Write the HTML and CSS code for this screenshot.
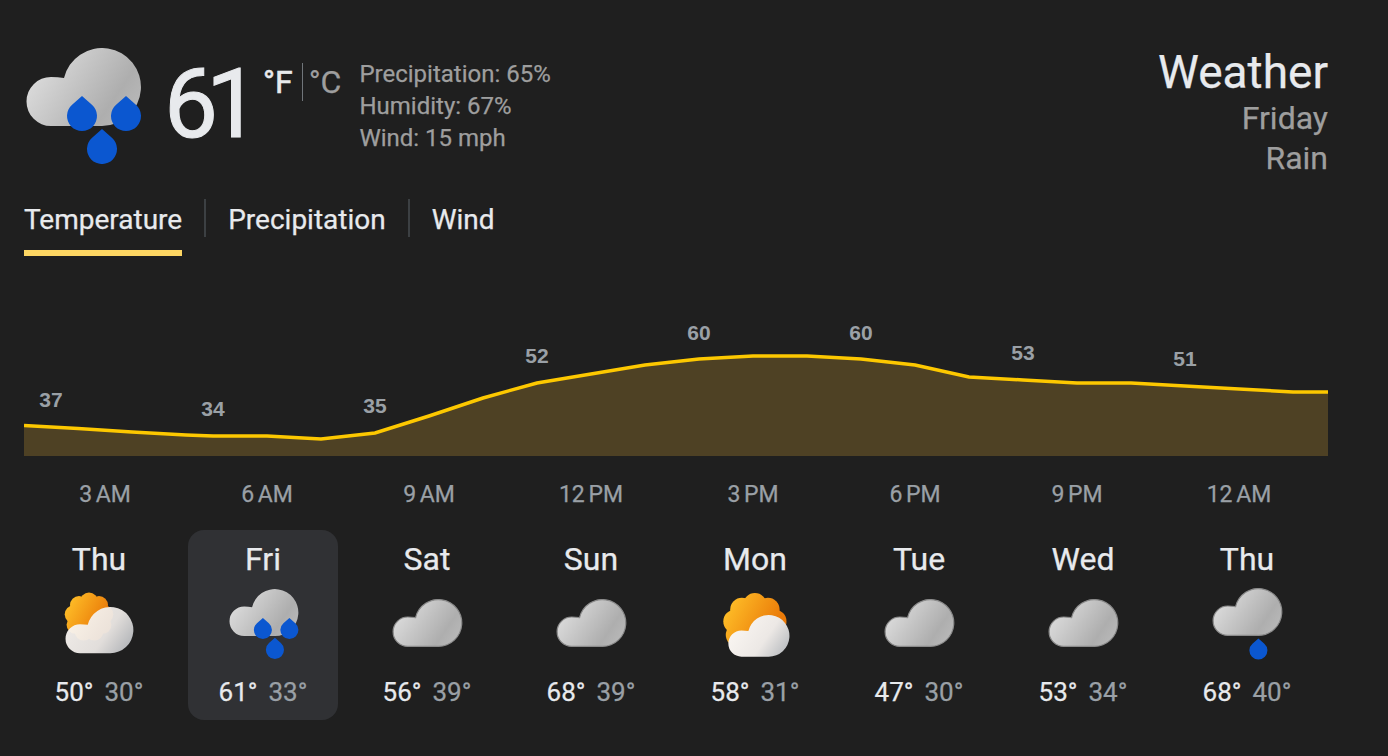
FILE: index.html
```html
<!DOCTYPE html>
<html lang="en">
<head>
<meta charset="utf-8">
<title>Weather</title>
<link rel="stylesheet" href="styles.css">
</head>
<body>
<svg class="defs" width="0" height="0" aria-hidden="true">
  <defs>
    <linearGradient id="grey" gradientUnits="userSpaceOnUse" x1="34" y1="58" x2="136" y2="128">
      <stop offset="0" stop-color="#e0e0e0"/><stop offset="0.72" stop-color="#aeaeae"/><stop offset="1" stop-color="#bcbcbc"/>
    </linearGradient>
    <linearGradient id="white" gradientUnits="userSpaceOnUse" x1="34" y1="60" x2="130" y2="126">
      <stop offset="0" stop-color="#fbf7f3"/><stop offset="0.6" stop-color="#ece8e5"/><stop offset="1" stop-color="#b9bcc0"/>
    </linearGradient>
    <linearGradient id="sunfill" gradientUnits="userSpaceOnUse" x1="6" y1="10" x2="40" y2="28">
      <stop offset="0" stop-color="#fdba26"/><stop offset="1" stop-color="#ea7a08"/>
    </linearGradient>
    <path id="cloudpath" d="M51 126A24.5 24.5 0 0 1 51 77Q58 77 64 78A39 39 0 1 1 102 126Z"/>
    <path id="drop" d="M15 0L24.9 8.75A15 15 0 1 1 5.1 8.75Z"/>
    <g id="sunshape" fill="url(#sunfill)">
      <circle cx="25" cy="25" r="20"/>
      <circle cx="25" cy="9.5" r="9"/><circle cx="35" cy="13.1" r="9"/><circle cx="40.3" cy="22.3" r="9"/>
      <circle cx="38.4" cy="32.8" r="9"/><circle cx="30.3" cy="39.6" r="9"/><circle cx="19.7" cy="39.6" r="9"/>
      <circle cx="11.6" cy="32.8" r="9"/><circle cx="9.7" cy="22.3" r="9"/><circle cx="15" cy="13.1" r="9"/>
    </g>
    <symbol id="rain3" viewBox="24 48 118 116">
      <use href="#cloudpath" fill="url(#grey)"/>
      <use href="#drop" x="67" y="96" fill="#0b57d0"/>
      <use href="#drop" x="111" y="96" fill="#0b57d0"/>
      <use href="#drop" x="87" y="129" fill="#0b57d0"/>
    </symbol>
    <symbol id="cloud" viewBox="23 47 120 80">
      <use href="#cloudpath" fill="url(#grey)" stroke="#8b8b8b" stroke-width="2"/>
    </symbol>
    <symbol id="rain1" viewBox="23 47 120 120">
      <use href="#cloudpath" fill="url(#grey)" stroke="#8b8b8b" stroke-width="2"/>
      <use href="#drop" x="87" y="131" fill="#0b57d0"/>
    </symbol>
    <symbol id="suncloudsmall" viewBox="0 0 70 63">
      <use href="#sunshape"/>
      <g transform="translate(-14.2 -13.5) scale(0.593)">
        <use href="#cloudpath" fill="url(#white)" fill-opacity="0.95"/>
      </g>
    </symbol>
    <symbol id="suncloudbig" viewBox="0 0 67 64">
      <g transform="translate(-0.6 -0.6) scale(1.3)"><use href="#sunshape"/></g>
      <g transform="translate(-8.8 -3.6) scale(0.534)">
        <use href="#cloudpath" fill="url(#white)"/>
      </g>
    </symbol>
  </defs>
</svg>

<main class="card">
  <header class="head">
    <div class="now">
      <svg class="now-icon"><use href="#rain3"/></svg>
      <span class="temp">61</span>
      <div class="units"><span class="unit on">°F</span><span class="unit off">°C</span></div>
      <ul class="stats">
        <li>Precipitation: 65%</li>
        <li>Humidity: 67%</li>
        <li>Wind: 15 mph</li>
      </ul>
    </div>
    <div class="where">
      <div class="title">Weather</div>
      <div class="sub">Friday</div>
      <div class="sub">Rain</div>
    </div>
  </header>

  <nav class="tabs">
    <a class="tab active">Temperature</a>
    <a class="tab">Precipitation</a>
    <a class="tab">Wind</a>
  </nav>

  <svg class="chart" viewBox="0 0 1304 200" width="1304" height="200">
    <polygon fill="#4e4124" points="0,169 54,172.5 108,176 162,179 189,180 243,180 297,183 351,177 405,160 459,142 513,127 567,118 621,109 675,103 729,100 783,100 837,103 891,109 945,121 999,124 1053,127 1107,127 1161,130 1215,133 1269,136 1304,136 1304,200 0,200"/>
    <polyline fill="none" stroke="#fdc800" stroke-width="3.5" points="0,169.5 54,172.5 108,176 162,179 189,180 243,180 297,183 351,177 405,160 459,142 513,127 567,118 621,109 675,103 729,100 783,100 837,103 891,109 945,121 999,124 1053,127 1107,127 1161,130 1215,133 1269,136 1304,136"/>
    <g class="vals">
      <text x="27" y="150.5">37</text>
      <text x="189" y="159.5">34</text>
      <text x="351" y="156.5">35</text>
      <text x="513" y="106.5">52</text>
      <text x="675" y="83.5">60</text>
      <text x="837" y="83.5">60</text>
      <text x="999" y="103.5">53</text>
      <text x="1161" y="109.5">51</text>
    </g>
  </svg>

  <div class="times">
    <span>3 AM</span><span>6 AM</span><span>9 AM</span><span>12 PM</span><span>3 PM</span><span>6 PM</span><span>9 PM</span><span>12 AM</span>
  </div>

  <div class="days">
    <div class="day"><div class="name">Thu</div><svg class="ic s1"><use href="#suncloudsmall"/></svg><div class="hl"><b>50°</b><i>30°</i></div></div>
    <div class="day sel"><div class="name">Fri</div><svg class="ic s2"><use href="#rain3"/></svg><div class="hl"><b>61°</b><i>33°</i></div></div>
    <div class="day"><div class="name">Sat</div><svg class="ic s3"><use href="#cloud"/></svg><div class="hl"><b>56°</b><i>39°</i></div></div>
    <div class="day"><div class="name">Sun</div><svg class="ic s3"><use href="#cloud"/></svg><div class="hl"><b>68°</b><i>39°</i></div></div>
    <div class="day"><div class="name">Mon</div><svg class="ic s4"><use href="#suncloudbig"/></svg><div class="hl"><b>58°</b><i>31°</i></div></div>
    <div class="day"><div class="name">Tue</div><svg class="ic s3"><use href="#cloud"/></svg><div class="hl"><b>47°</b><i>30°</i></div></div>
    <div class="day"><div class="name">Wed</div><svg class="ic s3"><use href="#cloud"/></svg><div class="hl"><b>53°</b><i>34°</i></div></div>
    <div class="day"><div class="name">Thu</div><svg class="ic s5"><use href="#rain1"/></svg><div class="hl"><b>68°</b><i>40°</i></div></div>
  </div>
</main>
</body>
</html>
```

FILE: styles.css
```css
* { box-sizing: border-box; }
html, body { margin: 0; height: 100%; }
body {
  background: #1f1f1f;
  color: #e8eaed;
  font-family: Roboto, "Liberation Sans", sans-serif;
  -webkit-text-stroke: 0.25px currentColor;
  overflow: hidden;
}
.defs { display: block; height: 0; }
.card { width: 1388px; height: 756px; padding: 48px 60px 0 24px; }

.head { display: flex; justify-content: space-between; height: 134px; }
.now { display: flex; align-items: flex-start; }
.now-icon { width: 118px; height: 116px; display: block; }
.temp { font-size: 96px; line-height: 108px; margin: 2px 0 0 22px; width: 99px; letter-spacing: -12px; -webkit-text-stroke: 1px currentColor; }
.units { display: flex; align-items: center; font-size: 32px; height: 38px; margin-top: 15px; }
.unit { line-height: 38px; }
.on { padding-right: 9px; border-right: 1px solid #70757a; -webkit-text-stroke: 0.6px currentColor; }
.off { padding-left: 6px; color: #9e9e9e; }
.stats { list-style: none; margin: 10px 0 0 18px; padding: 0; font-size: 24px; line-height: 32px; color: #9e9e9e; }

.where { text-align: right; }
.title { font-size: 46px; line-height: 48px; margin-bottom: 2px; }
.sub { font-size: 32px; line-height: 40px; color: #9e9e9e; }

.tabs { display: flex; height: 74px; align-items: flex-start; }
.tab { font-size: 28px; line-height: 38px; padding-top: 19px; position: relative; color: #e8eaed; margin-right: 46px; height: 74px; }
.tab + .tab::before { content: ""; position: absolute; left: -24px; top: 17px; width: 2px; height: 38px; background: #3c4043; }
.active { border-bottom: 6px solid #fdd663; }

.chart { display: block; }
.vals text { fill: #9aa0a6; font: 700 21px "Liberation Sans", sans-serif; text-anchor: middle; -webkit-text-stroke: 0; }

.times { display: grid; grid-template-columns: repeat(8, 162px); margin-top: 25px; font-size: 23px; word-spacing: -2px; line-height: 28px; color: #9aa0a6; text-align: center; }

.days { display: grid; grid-template-columns: repeat(8, 150px); column-gap: 14px; margin-top: 21px; }
.day { height: 190px; border-radius: 16px; display: flex; flex-direction: column; align-items: center; padding-top: 10px; position: relative; }
.sel { background: #303134; }
.name { font-size: 32px; line-height: 38px; }
.ic { position: absolute; display: block; }
.s1 { left: 40px; top: 62px; width: 70px; height: 63px; }
.s2 { left: 39.5px; top: 59px; width: 71px; height: 70px; }
.s3 { left: 39px; top: 69px; width: 72px; height: 48px; }
.s4 { left: 43px; top: 63px; width: 67px; height: 64px; }
.s5 { left: 39px; top: 58px; width: 72px; height: 72px; }
.hl { position: absolute; top: 146px; left: 0; right: 0; display: flex; justify-content: center; gap: 11px; font-size: 26px; line-height: 32px; }
.hl b { font-weight: 400; }
.hl i { font-style: normal; color: #9aa0a6; }
```
